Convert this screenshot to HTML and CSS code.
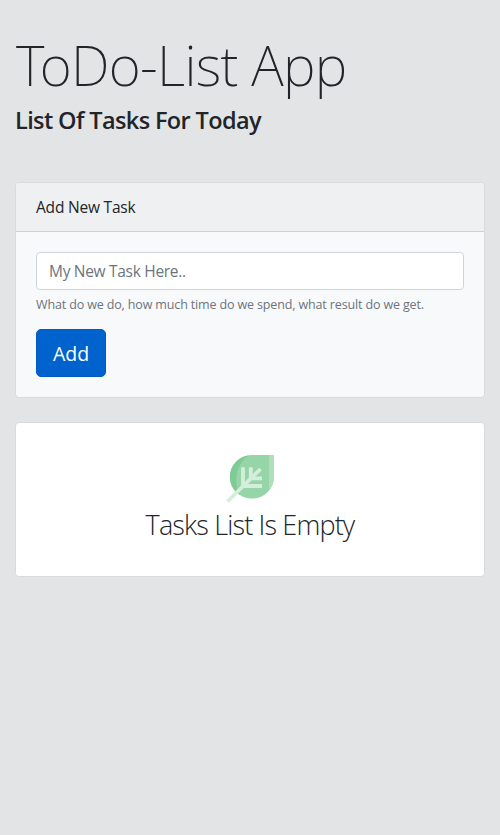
FILE: index.html
```html
<!DOCTYPE html>
<html lang="en">
<head>
<meta charset="utf-8">
<title>ToDo-List App</title>
<link rel="stylesheet" href="styles.css">
</head>
<body>
<main class="container">
  <h1 class="title">ToDo-List App</h1>
  <h4 class="subtitle">List Of Tasks For Today</h4>
  <section class="card card-form">
    <div class="card-header">Add New Task</div>
    <form class="card-body">
      <input class="field" type="text" placeholder="My New Task Here..">
      <small class="hint">What do we do, how much time do we spend, what result do we get.</small>
      <button class="btn" type="button">Add</button>
    </form>
  </section>
  <section class="card card-empty">
    <svg class="leaf" viewBox="226 454 49 49" width="49" height="49">
      <path fill="#96d5a8" d="M252 455H274V476.7A22 21.8 0 1 1 252 455Z"/>
      <path fill="#7fcb94" d="M249 455.2A22 21.8 0 0 0 240 495.2C234 484 234 466 249 455.2Z"/>
      <path fill="#afdfbd" d="M269 455H274V476.7Q274 485 269 490.5Z"/>
      <g fill="none" stroke="#d5eedb" stroke-width="3.8">
        <path d="M227.5 501.5L260.5 469"/>
        <path d="M243 467.3V486H262M250.8 467.3V478.4H262"/>
      </g>
    </svg>
    <p class="empty-text">Tasks List Is Empty</p>
  </section>
</main>
</body>
</html>
```
FILE: styles.css
```css
* { box-sizing: border-box; }
body {
  margin: 0;
  background: #e3e4e6;
  color: #212529;
  font: 400 16px/24px "Open Sans", "Noto Sans", sans-serif;
}
.container { padding: 31px 15px 0; }
.title {
  margin: 0;
  padding-left: 1px;
  font: 200 55px/67px "Noto Sans", sans-serif;
  letter-spacing: -0.7px;
}
.subtitle {
  margin: 8px 0 47px;
  font-size: 23.5px;
  font-weight: 600;
  line-height: 29px;
  letter-spacing: -0.62px;
}
.card {
  border: 1px solid #d9dadc;
  border-radius: 4px;
  overflow: hidden;
}
.card-form { height: 216px; background: #f8f9fb; margin-bottom: 24px; }
.card-header {
  height: 49px;
  padding: 12px 20px;
  background: #eff0f2;
  border-bottom: 1px solid #cfd2d5;
  font-size: 15.5px;
  letter-spacing: -0.2px;
}
.card-body { padding: 20px; }
.field {
  display: block;
  width: 100%;
  height: 38px;
  padding: 6px 12px;
  border: 1px solid #ced4da;
  border-radius: 4px;
  background: #fff;
  font: inherit;
  font-size: 15.5px;
  letter-spacing: -0.3px;
}
.field::placeholder { color: #6c757d; opacity: 1; }
.hint {
  display: block;
  margin-top: 5px;
  color: #6c757d;
  font-size: 12.5px;
  line-height: 20px;
  letter-spacing: -0.14px;
  white-space: nowrap;
}
.btn {
  display: block;
  width: 70px;
  height: 48px;
  margin-top: 14px;
  padding: 2px 0 0;
  border: 1px solid #005cbf;
  border-radius: 5px;
  background: #0062cc;
  color: #fff;
  font: inherit;
  font-size: 19.5px;
}
.card-empty {
  height: 155px;
  padding-top: 31px;
  background: #fff;
  text-align: center;
}
.leaf { display: block; margin: 0 auto; }
.empty-text {
  margin: 5px 0 0;
  font-size: 27px;
  font-weight: 300;
  line-height: 34px;
  letter-spacing: -0.85px;
}
```
